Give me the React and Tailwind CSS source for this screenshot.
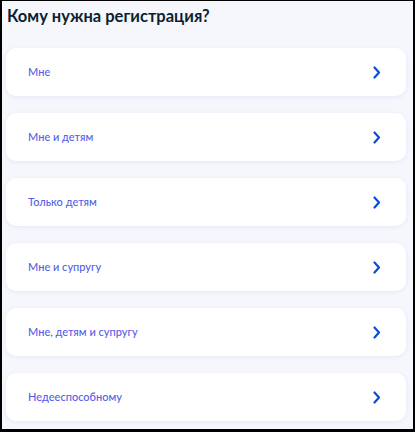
import React from 'react';

const options = [
  'Мне',
  'Мне и детям',
  'Только детям',
  'Мне и супругу',
  'Мне, детям и супругу',
  'Недееспособному',
];

const Chevron = () => (
  <svg width="8" height="13" viewBox="0 0 8 13" fill="none">
    <path d="M1.5 1.5L6 6.5L1.5 11.5" stroke="#0d4cd3" strokeWidth="2.2" strokeLinecap="round" strokeLinejoin="round" />
  </svg>
);

export default function App() {
  return (
    <div
      className="w-[415px] h-[432px] overflow-hidden bg-[#f5f7fc] border-black border-l-2 border-r-2 border-t border-b-[3px] flex flex-col pl-1 pr-[7px]"
      style={{ fontFamily: 'Lato, "Noto Sans", sans-serif' }}
    >
      <h1 className="text-[16.5px] font-bold text-[#0b1f33] leading-6 mt-[3px] pl-[1px]">
        Кому нужна регистрация?
      </h1>

      <div className="flex flex-col gap-[17px] mt-[20px]">
        {options.map((label) => (
          <div
            key={label}
            className="h-12 bg-white rounded-[10px] shadow-[0_1px_4px_rgba(40,70,160,0.08)] flex items-center justify-between pl-[22px] pr-[25px]"
          >
            <span className="text-[11px] font-medium text-[#5561e8]">{label}</span>
            <Chevron />
          </div>
        ))}
      </div>
    </div>
  );
}
